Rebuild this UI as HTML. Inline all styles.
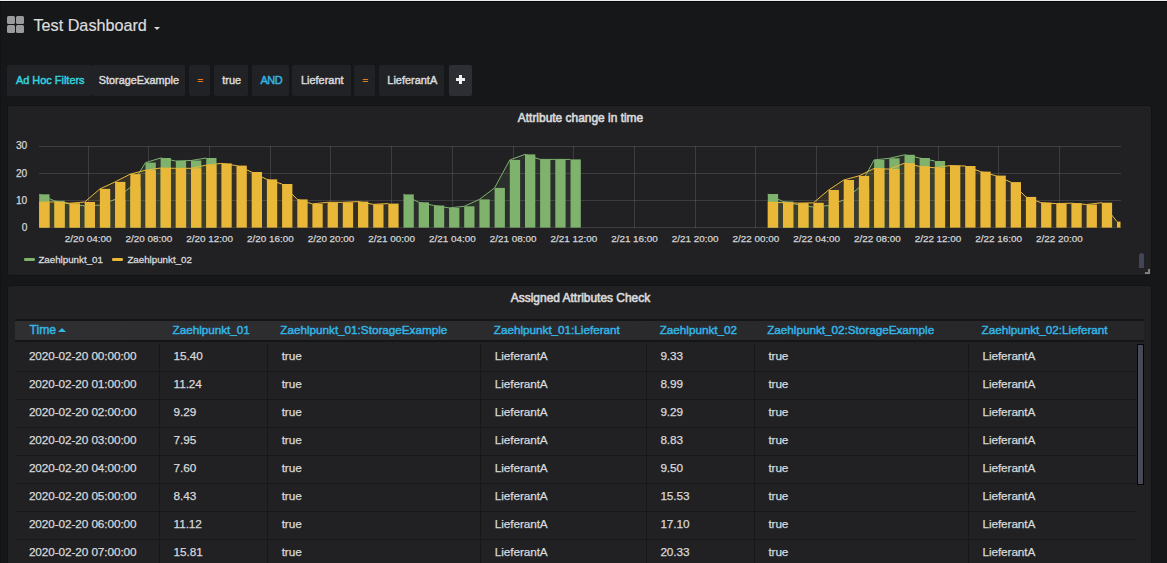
<!DOCTYPE html>
<html><head><meta charset="utf-8"><title>Test Dashboard</title>
<style>
html,body{margin:0;padding:0}
body{width:1167px;height:563px;overflow:hidden;background:#161719;position:relative;font-family:"Liberation Sans", sans-serif;color:#d8d9da}
div{position:absolute;box-sizing:border-box;white-space:nowrap}
.sq{background:#9b9b9b;border-radius:1.5px;width:8px;height:8px}
.title{left:33.5px;top:14px;font-size:16.2px;line-height:22px;color:#dcddde;-webkit-text-stroke:0.2px currentColor}
.fb{top:65px;height:31px;background:#212226;border-radius:2px;font-size:10.95px;line-height:31px;text-align:center;-webkit-text-stroke:0.45px currentColor}
.panel{left:7px;width:1144.8px;background:#212124;border:1px solid #131314;border-radius:3px}
.ptitle{left:0;width:1145px;text-align:center;font-size:11.95px;-webkit-text-stroke:0.6px currentColor;color:#d8d9da}
.th{top:320.5px;height:19px;line-height:18px;font-size:11.7px;color:#33b5e5;-webkit-text-stroke:0.45px currentColor}
.td{height:16px;line-height:16px;font-size:11.8px;letter-spacing:-0.1px;color:#d8d9da;-webkit-text-stroke:0.25px currentColor}
.rb{left:15px;width:1121px;height:1px;background:#161719}
.cb{top:344px;width:1px;height:230px;background:#161719}
</style></head><body>
<div style="left:0;top:0;width:1167px;height:1px;background:#ececf0"></div>
<div style="left:0;top:1px;width:1167px;height:1px;background:#08080a"></div>
<div style="left:0;top:2px;width:1px;height:561px;background:#121315"></div>
<div class="sq" style="left:7px;top:16px"></div><div class="sq" style="left:16px;top:16px"></div>
<div class="sq" style="left:7px;top:25px"></div><div class="sq" style="left:16px;top:25px"></div>
<div class="title">Test Dashboard</div>
<div style="left:154px;top:26.5px;width:0;height:0;border-left:3px solid transparent;border-right:3px solid transparent;border-top:3px solid #d8d9da"></div>

<div class="fb" style="left:7px;width:84.5px"></div><div class="fb" style="left:91.5px;width:93.5px"></div>
<div class="fb" style="left:8px;width:84.5px;background:none;color:#32d1df">Ad Hoc Filters</div>
<div class="fb" style="left:92.1px;width:93.5px;background:none;font-size:10.85px">StorageExample</div>
<div class="fb" style="padding-left:1.5px;left:189px;width:21px;color:#eb7b18;font-size:9.4px;line-height:29.4px">=</div>
<div class="fb" style="padding-left:1.5px;left:214px;width:34px">true</div>
<div class="fb" style="padding-left:1.5px;left:252px;width:37px;color:#33b5e5;letter-spacing:-0.5px">AND</div>
<div class="fb" style="padding-left:1.5px;left:292px;width:59px">Lieferant</div>
<div class="fb" style="padding-left:1.5px;left:354px;width:21px;color:#eb7b18;font-size:9.4px;line-height:29.4px">=</div>
<div class="fb" style="padding-left:1.5px;left:379px;width:65px">LieferantA</div>
<div class="fb" style="left:448.5px;width:23.5px;background:#2d2e33"><div style="left:7.4px;top:12.9px;width:8.8px;height:3.2px;background:#f0f0f0"></div><div style="left:10.2px;top:10.1px;width:3.2px;height:8.8px;background:#f0f0f0"></div></div>

<div class="panel" style="top:105px;height:170.8px"><div class="ptitle" style="top:4px;line-height:16px">Attribute change in time</div></div>
<svg class="chart" width="1167" height="563" viewBox="0 0 1167 563" style="position:absolute;left:0;top:0">
<g stroke="#c8c8c8" stroke-opacity="0.17" stroke-width="1" shape-rendering="crispEdges">
<line x1="39.0" y1="227.5" x2="1120.5" y2="227.5"/>
<line x1="39.0" y1="200.5" x2="1120.5" y2="200.5"/>
<line x1="39.0" y1="173.5" x2="1120.5" y2="173.5"/>
<line x1="39.0" y1="146.5" x2="1120.5" y2="146.5"/>
<line x1="88.5" y1="146" x2="88.5" y2="228"/>
<line x1="148.5" y1="146" x2="148.5" y2="228"/>
<line x1="209.5" y1="146" x2="209.5" y2="228"/>
<line x1="270.5" y1="146" x2="270.5" y2="228"/>
<line x1="330.5" y1="146" x2="330.5" y2="228"/>
<line x1="391.5" y1="146" x2="391.5" y2="228"/>
<line x1="452.5" y1="146" x2="452.5" y2="228"/>
<line x1="513.5" y1="146" x2="513.5" y2="228"/>
<line x1="573.5" y1="146" x2="573.5" y2="228"/>
<line x1="634.5" y1="146" x2="634.5" y2="228"/>
<line x1="695.5" y1="146" x2="695.5" y2="228"/>
<line x1="755.5" y1="146" x2="755.5" y2="228"/>
<line x1="816.5" y1="146" x2="816.5" y2="228"/>
<line x1="877.5" y1="146" x2="877.5" y2="228"/>
<line x1="938.5" y1="146" x2="938.5" y2="228"/>
<line x1="998.5" y1="146" x2="998.5" y2="228"/>
<line x1="1059.5" y1="146" x2="1059.5" y2="228"/>
</g>
<g>
<polygon points="39.2,194.3 54.4,200.8 69.6,204.0 84.7,205.9 99.9,205.1 115.1,199.4 130.3,187.3 145.5,162.6 160.6,158.0 175.8,161.0 191.0,160.5 206.2,158.0 206.2,227.6 39.2,227.6" fill="#7eb26d" fill-opacity="0.1"/>
<polyline points="39.2,194.3 54.4,200.8 69.6,204.0 84.7,205.9 99.9,205.1 115.1,199.4 130.3,187.3 145.5,162.6 160.6,158.0 175.8,161.0 191.0,160.5 206.2,158.0" fill="none" stroke="#7eb26d" stroke-width="1"/>
<polygon points="403.5,194.4 418.7,202.3 433.9,205.5 449.1,207.9 464.2,206.3 479.4,199.4 494.6,187.9 509.8,159.9 525.0,154.4 540.1,159.4 555.3,159.4 570.5,159.4 570.5,227.6 403.5,227.6" fill="#7eb26d" fill-opacity="0.1"/>
<polyline points="403.5,194.4 418.7,202.3 433.9,205.5 449.1,207.9 464.2,206.3 479.4,199.4 494.6,187.9 509.8,159.9 525.0,154.4 540.1,159.4 555.3,159.4 570.5,159.4" fill="none" stroke="#7eb26d" stroke-width="1"/>
<polygon points="767.8,194.0 783.0,201.5 798.2,204.7 813.4,207.1 828.6,205.5 843.7,200.0 858.9,187.9 874.1,159.9 889.3,158.3 904.5,154.8 919.6,158.0 934.8,161.0 934.8,227.6 767.8,227.6" fill="#7eb26d" fill-opacity="0.1"/>
<polyline points="767.8,194.0 783.0,201.5 798.2,204.7 813.4,207.1 828.6,205.5 843.7,200.0 858.9,187.9 874.1,159.9 889.3,158.3 904.5,154.8 919.6,158.0 934.8,161.0" fill="none" stroke="#7eb26d" stroke-width="1"/>
<rect x="39.2" y="194.3" width="10.3" height="33.3" fill="#7eb26d"/>
<rect x="54.4" y="200.8" width="10.3" height="26.8" fill="#7eb26d"/>
<rect x="69.6" y="204.0" width="10.3" height="23.6" fill="#7eb26d"/>
<rect x="84.7" y="205.9" width="10.3" height="21.7" fill="#7eb26d"/>
<rect x="99.9" y="205.1" width="10.3" height="22.5" fill="#7eb26d"/>
<rect x="115.1" y="199.4" width="10.3" height="28.2" fill="#7eb26d"/>
<rect x="130.3" y="187.3" width="10.3" height="40.3" fill="#7eb26d"/>
<rect x="145.5" y="162.6" width="10.3" height="65.0" fill="#7eb26d"/>
<rect x="160.6" y="158.0" width="10.3" height="69.6" fill="#7eb26d"/>
<rect x="175.8" y="161.0" width="10.3" height="66.6" fill="#7eb26d"/>
<rect x="191.0" y="160.5" width="10.3" height="67.1" fill="#7eb26d"/>
<rect x="206.2" y="158.0" width="10.3" height="69.6" fill="#7eb26d"/>
<rect x="403.5" y="194.4" width="10.3" height="33.2" fill="#7eb26d"/>
<rect x="418.7" y="202.3" width="10.3" height="25.3" fill="#7eb26d"/>
<rect x="433.9" y="205.5" width="10.3" height="22.1" fill="#7eb26d"/>
<rect x="449.1" y="207.9" width="10.3" height="19.7" fill="#7eb26d"/>
<rect x="464.2" y="206.3" width="10.3" height="21.3" fill="#7eb26d"/>
<rect x="479.4" y="199.4" width="10.3" height="28.2" fill="#7eb26d"/>
<rect x="494.6" y="187.9" width="10.3" height="39.7" fill="#7eb26d"/>
<rect x="509.8" y="159.9" width="10.3" height="67.7" fill="#7eb26d"/>
<rect x="525.0" y="154.4" width="10.3" height="73.2" fill="#7eb26d"/>
<rect x="540.1" y="159.4" width="10.3" height="68.2" fill="#7eb26d"/>
<rect x="555.3" y="159.4" width="10.3" height="68.2" fill="#7eb26d"/>
<rect x="570.5" y="159.4" width="10.3" height="68.2" fill="#7eb26d"/>
<rect x="767.8" y="194.0" width="10.3" height="33.6" fill="#7eb26d"/>
<rect x="783.0" y="201.5" width="10.3" height="26.1" fill="#7eb26d"/>
<rect x="798.2" y="204.7" width="10.3" height="22.9" fill="#7eb26d"/>
<rect x="813.4" y="207.1" width="10.3" height="20.5" fill="#7eb26d"/>
<rect x="828.6" y="205.5" width="10.3" height="22.1" fill="#7eb26d"/>
<rect x="843.7" y="200.0" width="10.3" height="27.6" fill="#7eb26d"/>
<rect x="858.9" y="187.9" width="10.3" height="39.7" fill="#7eb26d"/>
<rect x="874.1" y="159.9" width="10.3" height="67.7" fill="#7eb26d"/>
<rect x="889.3" y="158.3" width="10.3" height="69.3" fill="#7eb26d"/>
<rect x="904.5" y="154.8" width="10.3" height="72.8" fill="#7eb26d"/>
<rect x="919.6" y="158.0" width="10.3" height="69.6" fill="#7eb26d"/>
<rect x="934.8" y="161.0" width="10.3" height="66.6" fill="#7eb26d"/>
<polygon points="39.2,202.2 54.4,201.9 69.6,203.2 84.7,202.0 99.9,188.9 115.1,181.9 130.3,174.1 145.5,170.2 160.6,168.0 175.8,168.3 191.0,168.3 206.2,165.1 221.4,163.4 236.5,165.6 251.7,172.0 266.9,179.4 282.1,184.0 297.3,199.4 312.4,203.9 327.6,202.3 342.8,202.3 358.0,201.6 373.2,204.3 388.3,203.6 388.3,227.6 39.2,227.6" fill="#eab839" fill-opacity="0.1"/>
<polyline points="39.2,202.2 54.4,201.9 69.6,203.2 84.7,202.0 99.9,188.9 115.1,181.9 130.3,174.1 145.5,170.2 160.6,168.0 175.8,168.3 191.0,168.3 206.2,165.1 221.4,163.4 236.5,165.6 251.7,172.0 266.9,179.4 282.1,184.0 297.3,199.4 312.4,203.9 327.6,202.3 342.8,202.3 358.0,201.6 373.2,204.3 388.3,203.6" fill="none" stroke="#eab839" stroke-width="1"/>
<polygon points="767.8,202.0 783.0,202.7 798.2,203.1 813.4,202.8 828.6,190.0 843.7,180.0 858.9,175.9 874.1,168.5 889.3,169.1 904.5,163.2 919.6,166.4 934.8,167.8 950.0,165.6 965.2,166.0 980.4,171.6 995.5,175.6 1010.7,182.1 1025.9,196.9 1041.1,202.7 1056.3,203.6 1071.4,203.2 1086.6,204.5 1101.8,202.7 1117.0,221.6 1117.0,227.6 767.8,227.6" fill="#eab839" fill-opacity="0.1"/>
<polyline points="767.8,202.0 783.0,202.7 798.2,203.1 813.4,202.8 828.6,190.0 843.7,180.0 858.9,175.9 874.1,168.5 889.3,169.1 904.5,163.2 919.6,166.4 934.8,167.8 950.0,165.6 965.2,166.0 980.4,171.6 995.5,175.6 1010.7,182.1 1025.9,196.9 1041.1,202.7 1056.3,203.6 1071.4,203.2 1086.6,204.5 1101.8,202.7 1117.0,221.6" fill="none" stroke="#eab839" stroke-width="1"/>
<rect x="39.2" y="202.2" width="10.3" height="25.4" fill="#eab839"/>
<rect x="54.4" y="201.9" width="10.3" height="25.7" fill="#eab839"/>
<rect x="69.6" y="203.2" width="10.3" height="24.4" fill="#eab839"/>
<rect x="84.7" y="202.0" width="10.3" height="25.6" fill="#eab839"/>
<rect x="99.9" y="188.9" width="10.3" height="38.7" fill="#eab839"/>
<rect x="115.1" y="181.9" width="10.3" height="45.7" fill="#eab839"/>
<rect x="130.3" y="174.1" width="10.3" height="53.5" fill="#eab839"/>
<rect x="145.5" y="170.2" width="10.3" height="57.4" fill="#eab839"/>
<rect x="160.6" y="168.0" width="10.3" height="59.6" fill="#eab839"/>
<rect x="175.8" y="168.3" width="10.3" height="59.3" fill="#eab839"/>
<rect x="191.0" y="168.3" width="10.3" height="59.3" fill="#eab839"/>
<rect x="206.2" y="165.1" width="10.3" height="62.5" fill="#eab839"/>
<rect x="221.4" y="163.4" width="10.3" height="64.2" fill="#eab839"/>
<rect x="236.5" y="165.6" width="10.3" height="62.0" fill="#eab839"/>
<rect x="251.7" y="172.0" width="10.3" height="55.6" fill="#eab839"/>
<rect x="266.9" y="179.4" width="10.3" height="48.2" fill="#eab839"/>
<rect x="282.1" y="184.0" width="10.3" height="43.6" fill="#eab839"/>
<rect x="297.3" y="199.4" width="10.3" height="28.2" fill="#eab839"/>
<rect x="312.4" y="203.9" width="10.3" height="23.7" fill="#eab839"/>
<rect x="327.6" y="202.3" width="10.3" height="25.3" fill="#eab839"/>
<rect x="342.8" y="202.3" width="10.3" height="25.3" fill="#eab839"/>
<rect x="358.0" y="201.6" width="10.3" height="26.0" fill="#eab839"/>
<rect x="373.2" y="204.3" width="10.3" height="23.3" fill="#eab839"/>
<rect x="388.3" y="203.6" width="10.3" height="24.0" fill="#eab839"/>
<rect x="767.8" y="202.0" width="10.3" height="25.6" fill="#eab839"/>
<rect x="783.0" y="202.7" width="10.3" height="24.9" fill="#eab839"/>
<rect x="798.2" y="203.1" width="10.3" height="24.5" fill="#eab839"/>
<rect x="813.4" y="202.8" width="10.3" height="24.8" fill="#eab839"/>
<rect x="828.6" y="190.0" width="10.3" height="37.6" fill="#eab839"/>
<rect x="843.7" y="180.0" width="10.3" height="47.6" fill="#eab839"/>
<rect x="858.9" y="175.9" width="10.3" height="51.7" fill="#eab839"/>
<rect x="874.1" y="168.5" width="10.3" height="59.1" fill="#eab839"/>
<rect x="889.3" y="169.1" width="10.3" height="58.5" fill="#eab839"/>
<rect x="904.5" y="163.2" width="10.3" height="64.4" fill="#eab839"/>
<rect x="919.6" y="166.4" width="10.3" height="61.2" fill="#eab839"/>
<rect x="934.8" y="167.8" width="10.3" height="59.8" fill="#eab839"/>
<rect x="950.0" y="165.6" width="10.3" height="62.0" fill="#eab839"/>
<rect x="965.2" y="166.0" width="10.3" height="61.6" fill="#eab839"/>
<rect x="980.4" y="171.6" width="10.3" height="56.0" fill="#eab839"/>
<rect x="995.5" y="175.6" width="10.3" height="52.0" fill="#eab839"/>
<rect x="1010.7" y="182.1" width="10.3" height="45.5" fill="#eab839"/>
<rect x="1025.9" y="196.9" width="10.3" height="30.7" fill="#eab839"/>
<rect x="1041.1" y="202.7" width="10.3" height="24.9" fill="#eab839"/>
<rect x="1056.3" y="203.6" width="10.3" height="24.0" fill="#eab839"/>
<rect x="1071.4" y="203.2" width="10.3" height="24.4" fill="#eab839"/>
<rect x="1086.6" y="204.5" width="10.3" height="23.1" fill="#eab839"/>
<rect x="1101.8" y="202.7" width="10.3" height="24.9" fill="#eab839"/>
<rect x="1117.0" y="221.6" width="3.5" height="6.0" fill="#eab839"/>
</g>
<g font-family='Liberation Sans, sans-serif' font-size="9.9" fill="#d4d5d6" stroke="#d4d5d6" stroke-width="0.25">
<text x="88.2" y="241.7" text-anchor="middle">2/20 04:00</text>
<text x="148.9" y="241.7" text-anchor="middle">2/20 08:00</text>
<text x="209.6" y="241.7" text-anchor="middle">2/20 12:00</text>
<text x="270.3" y="241.7" text-anchor="middle">2/20 16:00</text>
<text x="331.0" y="241.7" text-anchor="middle">2/20 20:00</text>
<text x="391.7" y="241.7" text-anchor="middle">2/21 00:00</text>
<text x="452.4" y="241.7" text-anchor="middle">2/21 04:00</text>
<text x="513.1" y="241.7" text-anchor="middle">2/21 08:00</text>
<text x="573.8" y="241.7" text-anchor="middle">2/21 12:00</text>
<text x="634.5" y="241.7" text-anchor="middle">2/21 16:00</text>
<text x="695.2" y="241.7" text-anchor="middle">2/21 20:00</text>
<text x="755.9" y="241.7" text-anchor="middle">2/22 00:00</text>
<text x="816.6" y="241.7" text-anchor="middle">2/22 04:00</text>
<text x="877.3" y="241.7" text-anchor="middle">2/22 08:00</text>
<text x="938.0" y="241.7" text-anchor="middle">2/22 12:00</text>
<text x="998.7" y="241.7" text-anchor="middle">2/22 16:00</text>
<text x="1059.4" y="241.7" text-anchor="middle">2/22 20:00</text>
<text x="27.3" y="230.6" text-anchor="end" font-size="10.2">0</text>
<text x="27.3" y="203.5" text-anchor="end" font-size="10.2">10</text>
<text x="27.3" y="176.5" text-anchor="end" font-size="10.2">20</text>
<text x="27.3" y="149.4" text-anchor="end" font-size="10.2">30</text>
</g>
</svg>
<div style="left:24.3px;top:258.2px;width:10.5px;height:2.6px;background:#7eb26d;border-radius:1.3px"></div>
<div style="left:38.4px;top:252px;font-size:9.75px;line-height:15px;-webkit-text-stroke:0.3px currentColor">Zaehlpunkt_01</div>
<div style="left:112.3px;top:258.2px;width:10.5px;height:2.6px;background:#eab839;border-radius:1.3px"></div>
<div style="left:127.4px;top:252px;font-size:9.75px;line-height:15px;-webkit-text-stroke:0.3px currentColor">Zaehlpunkt_02</div>
<div style="left:1139px;top:253px;width:5px;height:15px;background:#424458;border-radius:2.5px 2.5px 0 0"></div>
<div style="left:1148px;top:269px;width:2px;height:5px;background:#808080"></div>
<div style="left:1145px;top:272px;width:5px;height:2px;background:#808080"></div>

<div class="panel" style="top:285px;height:300px"><div class="ptitle" style="top:4px;line-height:16px">Assigned Attributes Check</div></div>
<div style="left:15px;top:319.1px;width:1129px;height:22.8px;background:#141516"></div>
<div style="left:15px;top:321.3px;width:1129px;height:18.4px;background:linear-gradient(90deg,#2f2f32,#262629)"></div>
<div style="left:57.9px;top:328.3px;width:0;height:0;border-left:4.1px solid transparent;border-right:4.1px solid transparent;border-bottom:4.6px solid #33b5e5"></div>
<div class="th" style="left:29.5px;font-size:12.2px">Time</div>
<div class="th" style="left:172.5px">Zaehlpunkt_01</div>
<div class="th" style="left:280.3px">Zaehlpunkt_01:StorageExample</div>
<div class="th" style="left:493.8px">Zaehlpunkt_01:Lieferant</div>
<div class="th" style="left:659.7px">Zaehlpunkt_02</div>
<div class="th" style="left:767.2px">Zaehlpunkt_02:StorageExample</div>
<div class="th" style="left:981.5px">Zaehlpunkt_02:Lieferant</div>
<div class="td" style="left:28.9px;top:348.1px">2020-02-20 00:00:00</div>
<div class="td" style="left:173.6px;top:348.1px">15.40</div>
<div class="td" style="left:281.7px;top:348.1px">true</div>
<div class="td" style="left:494.8px;top:348.1px">LieferantA</div>
<div class="td" style="left:660.4px;top:348.1px">9.33</div>
<div class="td" style="left:768.4px;top:348.1px">true</div>
<div class="td" style="left:982.5px;top:348.1px">LieferantA</div>
<div class="rb" style="top:371.0px"></div>
<div class="td" style="left:28.9px;top:376.1px">2020-02-20 01:00:00</div>
<div class="td" style="left:173.6px;top:376.1px">11.24</div>
<div class="td" style="left:281.7px;top:376.1px">true</div>
<div class="td" style="left:494.8px;top:376.1px">LieferantA</div>
<div class="td" style="left:660.4px;top:376.1px">8.99</div>
<div class="td" style="left:768.4px;top:376.1px">true</div>
<div class="td" style="left:982.5px;top:376.1px">LieferantA</div>
<div class="rb" style="top:399.0px"></div>
<div class="td" style="left:28.9px;top:404.1px">2020-02-20 02:00:00</div>
<div class="td" style="left:173.6px;top:404.1px">9.29</div>
<div class="td" style="left:281.7px;top:404.1px">true</div>
<div class="td" style="left:494.8px;top:404.1px">LieferantA</div>
<div class="td" style="left:660.4px;top:404.1px">9.29</div>
<div class="td" style="left:768.4px;top:404.1px">true</div>
<div class="td" style="left:982.5px;top:404.1px">LieferantA</div>
<div class="rb" style="top:427.0px"></div>
<div class="td" style="left:28.9px;top:432.1px">2020-02-20 03:00:00</div>
<div class="td" style="left:173.6px;top:432.1px">7.95</div>
<div class="td" style="left:281.7px;top:432.1px">true</div>
<div class="td" style="left:494.8px;top:432.1px">LieferantA</div>
<div class="td" style="left:660.4px;top:432.1px">8.83</div>
<div class="td" style="left:768.4px;top:432.1px">true</div>
<div class="td" style="left:982.5px;top:432.1px">LieferantA</div>
<div class="rb" style="top:455.0px"></div>
<div class="td" style="left:28.9px;top:460.1px">2020-02-20 04:00:00</div>
<div class="td" style="left:173.6px;top:460.1px">7.60</div>
<div class="td" style="left:281.7px;top:460.1px">true</div>
<div class="td" style="left:494.8px;top:460.1px">LieferantA</div>
<div class="td" style="left:660.4px;top:460.1px">9.50</div>
<div class="td" style="left:768.4px;top:460.1px">true</div>
<div class="td" style="left:982.5px;top:460.1px">LieferantA</div>
<div class="rb" style="top:483.0px"></div>
<div class="td" style="left:28.9px;top:488.1px">2020-02-20 05:00:00</div>
<div class="td" style="left:173.6px;top:488.1px">8.43</div>
<div class="td" style="left:281.7px;top:488.1px">true</div>
<div class="td" style="left:494.8px;top:488.1px">LieferantA</div>
<div class="td" style="left:660.4px;top:488.1px">15.53</div>
<div class="td" style="left:768.4px;top:488.1px">true</div>
<div class="td" style="left:982.5px;top:488.1px">LieferantA</div>
<div class="rb" style="top:511.0px"></div>
<div class="td" style="left:28.9px;top:516.1px">2020-02-20 06:00:00</div>
<div class="td" style="left:173.6px;top:516.1px">11.12</div>
<div class="td" style="left:281.7px;top:516.1px">true</div>
<div class="td" style="left:494.8px;top:516.1px">LieferantA</div>
<div class="td" style="left:660.4px;top:516.1px">17.10</div>
<div class="td" style="left:768.4px;top:516.1px">true</div>
<div class="td" style="left:982.5px;top:516.1px">LieferantA</div>
<div class="rb" style="top:539.0px"></div>
<div class="td" style="left:28.9px;top:544.1px">2020-02-20 07:00:00</div>
<div class="td" style="left:173.6px;top:544.1px">15.81</div>
<div class="td" style="left:281.7px;top:544.1px">true</div>
<div class="td" style="left:494.8px;top:544.1px">LieferantA</div>
<div class="td" style="left:660.4px;top:544.1px">20.33</div>
<div class="td" style="left:768.4px;top:544.1px">true</div>
<div class="td" style="left:982.5px;top:544.1px">LieferantA</div>
<div class="rb" style="top:567.0px"></div>
<div class="cb" style="left:159.0px"></div>
<div class="cb" style="left:267.2px"></div>
<div class="cb" style="left:479.9px"></div>
<div class="cb" style="left:646.2px"></div>
<div class="cb" style="left:754.2px"></div>
<div class="cb" style="left:967.9px"></div>
<div style="left:1136.8px;top:344px;width:7.4px;height:140.6px;background:linear-gradient(90deg,#4a4c60,#46474f);border:1.2px solid #030304"></div>
</body></html>
